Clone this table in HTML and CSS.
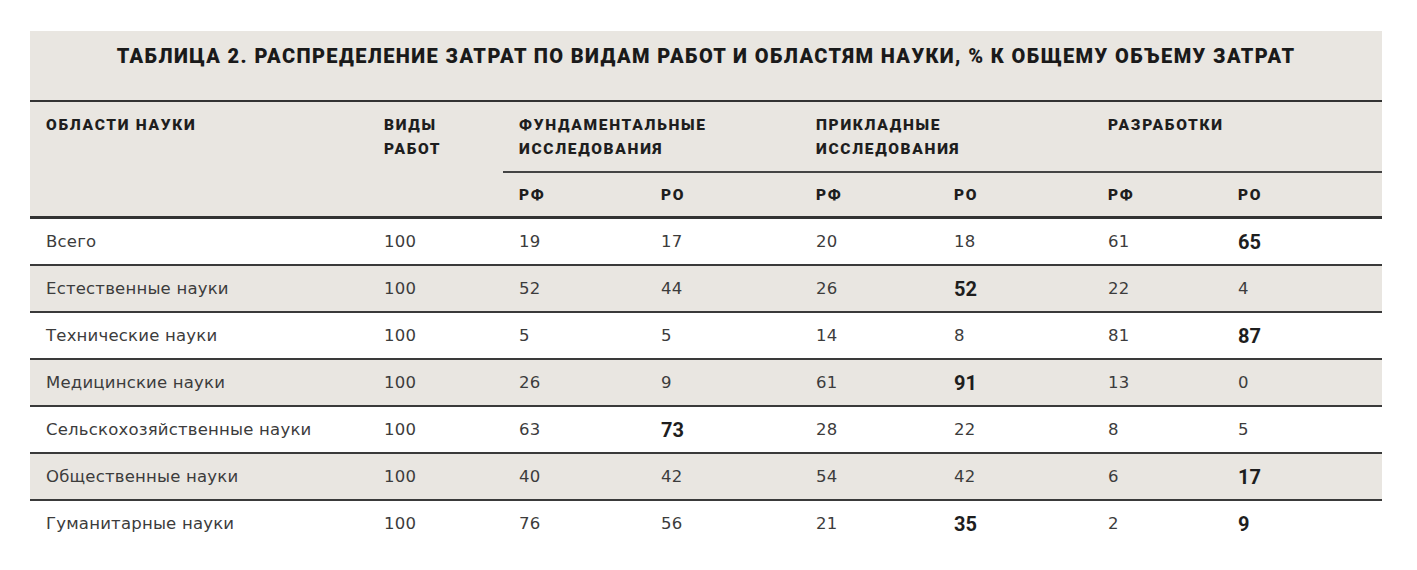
FILE: index.html
```html
<!DOCTYPE html>
<html lang="ru">
<head>
<meta charset="utf-8">
<title>Таблица 2</title>
<link rel="stylesheet" href="styles.css">
</head>
<body>
<table class="data">
  <colgroup>
    <col class="c-area"><col class="c-kind"><col class="c-3"><col class="c-4"><col class="c-5"><col class="c-6"><col class="c-7"><col class="c-8">
  </colgroup>
  <thead>
    <tr class="title-row">
      <th colspan="8" class="title">ТАБЛИЦА 2. РАСПРЕДЕЛЕНИЕ ЗАТРАТ ПО ВИДАМ РАБОТ И ОБЛАСТЯМ НАУКИ, % К ОБЩЕМУ ОБЪЕМУ ЗАТРАТ</th>
    </tr>
    <tr class="group-row">
      <th rowspan="2" class="hd">ОБЛАСТИ НАУКИ</th>
      <th rowspan="2" class="hd">ВИДЫ<br>РАБОТ</th>
      <th colspan="2" class="hd grp">ФУНДАМЕНТАЛЬНЫЕ<br>ИССЛЕДОВАНИЯ</th>
      <th colspan="2" class="hd grp">ПРИКЛАДНЫЕ<br>ИССЛЕДОВАНИЯ</th>
      <th colspan="2" class="hd grp">РАЗРАБОТКИ</th>
    </tr>
    <tr class="sub-row">
      <th class="hd sub">РФ</th><th class="hd sub">РО</th>
      <th class="hd sub">РФ</th><th class="hd sub">РО</th>
      <th class="hd sub">РФ</th><th class="hd sub">РО</th>
    </tr>
  </thead>
  <tbody>
    <tr><td>Всего</td><td>100</td><td>19</td><td>17</td><td>20</td><td>18</td><td>61</td><td class="b">65</td></tr>
    <tr><td>Естественные науки</td><td>100</td><td>52</td><td>44</td><td>26</td><td class="b">52</td><td>22</td><td>4</td></tr>
    <tr><td>Технические науки</td><td>100</td><td>5</td><td>5</td><td>14</td><td>8</td><td>81</td><td class="b">87</td></tr>
    <tr><td>Медицинские науки</td><td>100</td><td>26</td><td>9</td><td>61</td><td class="b">91</td><td>13</td><td>0</td></tr>
    <tr><td>Сельскохозяйственные науки</td><td>100</td><td>63</td><td class="b">73</td><td>28</td><td>22</td><td>8</td><td>5</td></tr>
    <tr><td>Общественные науки</td><td>100</td><td>40</td><td>42</td><td>54</td><td>42</td><td>6</td><td class="b">17</td></tr>
    <tr><td>Гуманитарные науки</td><td>100</td><td>76</td><td>56</td><td>21</td><td class="b">35</td><td>2</td><td class="b">9</td></tr>
  </tbody>
</table>
</body>
</html>
```
FILE: styles.css
```css
html, body {
  margin: 0;
  padding: 0;
  background: #ffffff;
}
body {
  padding: 31px 35px 0 30px;
}
.data {
  width: 1352px;
  table-layout: fixed;
  border-collapse: collapse;
  border-spacing: 0;
  color: #222;
}
.c-area { width: 338px; }
.c-kind { width: 135px; }
.c-3 { width: 142px; }
.c-4 { width: 155px; }
.c-5 { width: 138px; }
.c-6 { width: 154px; }
.c-7 { width: 130px; }
.c-8 { width: 160px; }

thead th {
  background: #e9e6e1;
  text-align: left;
  font-family: Roboto, "Liberation Sans", sans-serif;
  font-weight: 900;
}
.title {
  height: 70px;
  box-sizing: border-box;
  padding: 12px 0 0 0;
  vertical-align: top;
  text-align: center;
  font-size: 20px;
  line-height: 26px;
  letter-spacing: 1.4px;
  border-bottom: 2px solid #333;
  color: #1a1a1a;
}
.hd {
  font-size: 15.5px;
  line-height: 24px;
  letter-spacing: 1.7px;
  padding: 0 0 0 16px;
  vertical-align: top;
  color: #1e1e1e;
}
.group-row .hd {
  padding-top: 11px;
  height: 58px;
}
.group-row .grp {
  border-bottom: 2px solid #444;
}
.sub-row .hd {
  height: 43px;
  padding-top: 0;
  vertical-align: middle;
}
thead tr.sub-row th {
  border-bottom: 3px solid #333;
}
thead tr.group-row th[rowspan] {
  border-bottom: 3px solid #333;
}

tbody td {
  height: 45px;
  padding: 0 0 0 16px;
  font-family: "DejaVu Sans", sans-serif;
  font-size: 16.5px;
  font-weight: 400;
  color: #3c3c3c;
  letter-spacing: 0.2px;
  vertical-align: middle;
  border-bottom: 2px solid #3a3a3a;
}
tbody tr:nth-child(even) td {
  background: #e9e6e1;
}
tbody tr:last-child td {
  border-bottom: none;
}
tbody td.b {
  font-family: Roboto, "Liberation Sans", sans-serif;
  font-weight: 700;
  font-size: 20px;
  color: #1e1e1e;
  letter-spacing: 0;
}
```
